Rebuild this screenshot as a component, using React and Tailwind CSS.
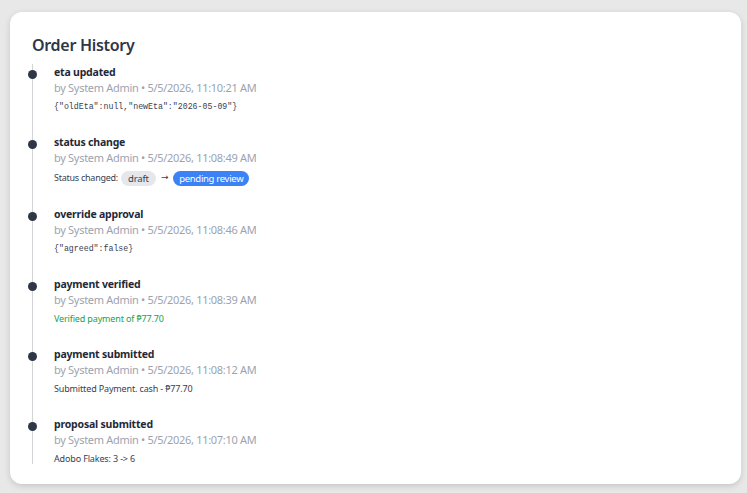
import React from "react";

const events = [
  {
    title: "eta updated",
    time: "5/5/2026, 11:10:21 AM",
    kind: "json",
    detail: '{"oldEta":null,"newEta":"2026-05-09"}',
  },
  { title: "status change", time: "5/5/2026, 11:08:49 AM", kind: "status" },
  {
    title: "override approval",
    time: "5/5/2026, 11:08:46 AM",
    kind: "json",
    detail: '{"agreed":false}',
  },
  {
    title: "payment verified",
    time: "5/5/2026, 11:08:39 AM",
    kind: "success",
    detail: "Verified payment of ₱77.70",
  },
  {
    title: "payment submitted",
    time: "5/5/2026, 11:08:12 AM",
    kind: "text",
    detail: "Submitted Payment. cash - ₱77.70",
  },
  {
    title: "proposal submitted",
    time: "5/5/2026, 11:07:10 AM",
    kind: "text",
    detail: "Adobo Flakes: 3 -> 6",
  },
];

function Detail({ e }) {
  if (e.kind === "json") {
    return (
      <div className="mt-[3px] h-[16px] flex items-center text-[8.25px] text-[#374151] [font-family:'Liberation_Mono',monospace]">
        {e.detail}
      </div>
    );
  }
  if (e.kind === "status") {
    return (
      <div className="mt-[3px] h-[18px] flex items-center gap-[3px] text-[9px] tracking-[-0.25px] text-[#374151]">
        <span>Status changed:</span>
        <span className="rounded-full bg-[#e5e7eb] px-[7px] text-[9.5px] leading-[15px] tracking-[-0.15px] text-[#374151]">draft</span>
        <span className="mx-[2px] text-[9px] [font-family:'DejaVu_Sans',sans-serif]">→</span>
        <span className="rounded-full bg-[#3b82f6] px-[6px] text-[9.5px] leading-[15px] tracking-[-0.3px] text-white">pending review</span>
      </div>
    );
  }
  if (e.kind === "success") {
    return (
      <div className="mt-[3px] h-[16px] flex items-center text-[9px] tracking-[-0.15px] text-[#16a34a]">{e.detail}</div>
    );
  }
  return (
    <div className="mt-[3px] h-[16px] flex items-center text-[9px] tracking-[-0.15px] text-[#374151]">{e.detail}</div>
  );
}

export default function App() {
  return (
    <div className="min-h-[493px] w-[747px] bg-[#e8e8e8] pt-[12px] pl-[10px] [font-family:'Noto_Sans',sans-serif]">
      <div className="h-[472px] w-[731px] rounded-[12px] bg-white pl-[18px] pt-[21px] shadow-[0_2px_6px_rgba(0,0,0,0.15)]">
        <h2 className="ml-[4px] text-[16px] leading-[24px] font-semibold tracking-[-0.3px] text-[#2d3748]">Order History</h2>
        <ul className="relative mt-[8px]">
          <div className="absolute left-[4px] top-[-1px] h-[400px] w-px bg-[#d4d4d8]" />
          {events.map((e) => (
            <li key={e.title} className="relative flex min-h-[70px]">
              <div className="w-[26px] shrink-0">
                <div className="mt-[5px] h-[9px] w-[9px] rounded-full bg-[#2f3747]" />
              </div>
              <div className="pb-[20px]">
                <div className="text-[10.5px] leading-[14px] font-bold tracking-[-0.2px] text-[#1f2937]">{e.title}</div>
                <div className="mt-[1px] text-[11px] leading-[16px] tracking-[-0.3px] text-[#9ca3af]">
                  by System Admin • {e.time}
                </div>
                <Detail e={e} />
              </div>
            </li>
          ))}
        </ul>
      </div>
    </div>
  );
}
